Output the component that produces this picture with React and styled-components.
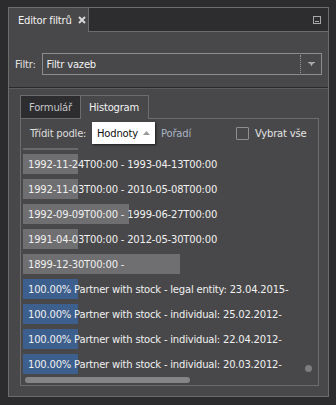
import React from "react";
import styled, { createGlobalStyle } from "styled-components";

const Global = createGlobalStyle`
  html, body { margin: 0; padding: 0; background: #2c2c2e; }
  body { font-family: "DejaVu Sans", Tahoma, sans-serif; font-size: 10px; color: #e6e6e6; }
`;

const Page = styled.div`
  width: 336px;
  height: 405px;
  padding: 7px 8px 0 8px;
  box-sizing: border-box;
  background: #2c2c2e;
`;

const Panel = styled.div`
  width: 321px;
  height: 390px;
  box-sizing: border-box;
  border: 1px solid #6c6c6c;
  background: #48484a;
  display: flex;
  flex-direction: column;
`;

const TabStrip = styled.div`
  display: flex;
  height: 24px;
`;

const DocTab = styled.div`
  width: 80px;
  border-right: 1px solid #6c6c6c;
  background: #48484a;
  display: flex;
  align-items: center;
  padding-left: 9px;
  box-sizing: border-box;
  gap: 6px;
  color: #f2f2f2;
  font-size: 10px;
  letter-spacing: -0.2px;
  white-space: nowrap;
`;

const StripRest = styled.div`
  flex: 1;
  background: #2d2d30;
  border-bottom: 1px solid #6c6c6c;
  display: flex;
  align-items: center;
  justify-content: flex-end;
  padding-right: 7px;
`;

const FilterRow = styled.div`
  display: flex;
  align-items: center;
  padding: 21px 6px 0 6px;
  gap: 6px;
`;

const Label = styled.span`
  color: #e0e0e0;
  font-size: 10px;
  letter-spacing: -0.2px;
`;

const Combo = styled.div`
  flex: 1;
  height: 22px;
  box-sizing: border-box;
  border: 1px solid #8c8c8c;
  display: flex;
  align-items: center;
  padding-left: 4px;
  color: #f0f0f0;
  font-size: 10px;
  letter-spacing: -0.2px;
`;

const ComboText = styled.span`
  flex: 1;
`;

const ComboButton = styled.div`
  width: 20px;
  height: 18px;
  border-left: 1px dotted #9a9a9a;
  display: flex;
  align-items: center;
  justify-content: center;
`;

const Divider = styled.div`
  margin-top: 12px;
  height: 1px;
  background: #2a2a2c;
  border-bottom: 1px solid #5c5c5e;
`;

const TabsArea = styled.div`
  flex: 1;
  display: flex;
  flex-direction: column;
  padding: 6px 9px 10px 11px;
`;

const TabHeaders = styled.div`
  display: flex;
  height: 23px;
`;

const InnerTab = styled.div`
  box-sizing: border-box;
  width: ${p => p.$w}px;
  border: 1px solid #6c6c6c;
  border-bottom: none;
  ${p => (p.$first ? "" : "border-left: none;")}
  background: ${p => (p.$active ? "#48484a" : "#2d2d30")};
  color: ${p => (p.$active ? "#f2f2f2" : "#c4c4c8")};
  display: flex;
  align-items: center;
  padding-left: 8px;
  font-size: 10px;
  letter-spacing: -0.2px;
  margin-bottom: ${p => (p.$active ? "-1px" : "0")};
  position: relative;
  z-index: ${p => (p.$active ? 1 : 0)};
`;

const InnerBox = styled.div`
  flex: 1;
  border: 1px solid #6c6c6c;
  display: flex;
  flex-direction: column;
  position: relative;
`;

const SortRow = styled.div`
  display: flex;
  align-items: center;
  padding: 3px 0 0 9px;
  height: 22px;
`;

const SortLabel = styled.span`
  color: #dedede;
  font-size: 10px;
  letter-spacing: -0.2px;
  width: 62px;
`;

const SortButton = styled.div`
  height: 22px;
  width: 63px;
  box-sizing: border-box;
  background: #ffffff;
  color: #111;
  display: flex;
  align-items: center;
  padding-left: 5px;
  gap: 5px;
  font-size: 10px;
  letter-spacing: -0.2px;
  box-shadow: 1px 1px 2px rgba(0, 0, 0, 0.6);
`;

const SortAlt = styled.span`
  margin-left: 6px;
  color: #a9b3c4;
  font-size: 10px;
  letter-spacing: -0.2px;
`;

const CheckWrap = styled.label`
  margin-left: 45px;
  display: flex;
  align-items: center;
  gap: 6px;
  color: #e4e4e4;
  font-size: 10px;
  letter-spacing: -0.2px;
`;

const CheckBox = styled.span`
  width: 13px;
  height: 13px;
  box-sizing: border-box;
  border: 1px solid #8e8e8e;
  border-radius: 1px;
`;

const HeadLine = styled.div`
  margin: 4px 0 0 2px;
  width: 55px;
  height: 2px;
  background: #6a6a6c;
`;

const List = styled.div`
  display: flex;
  flex-direction: column;
  gap: 5px;
  padding: 4px 0 0 2px;
  flex: 1;
`;

const Row = styled.div`
  position: relative;
  height: 20px;
  display: flex;
  align-items: center;
  white-space: nowrap;
`;

const Bar = styled.div`
  position: absolute;
  left: 0;
  top: 0;
  bottom: 0;
  background: ${p => (p.$blue ? "#3d5f8d" : "#6f6f71")};
`;

const RowText = styled.span`
  position: relative;
  padding-left: 5px;
  color: #f0f0f0;
  font-size: 10px;
  letter-spacing: -0.2px;
`;

const HScroll = styled.div`
  margin: 0 0 2px 4px;
  width: 165px;
  height: 6px;
  border-radius: 3px;
  background: #858587;
`;

const VDot = styled.div`
  position: absolute;
  right: 6px;
  bottom: 13px;
  width: 7px;
  height: 7px;
  border-radius: 50%;
  background: #7d7d7f;
`;

const rows = [
  { w: 55, t: "1992-11-24T00:00 - 1993-04-13T00:00" },
  { w: 55, t: "1992-11-03T00:00 - 2010-05-08T00:00" },
  { w: 106, t: "1992-09-09T00:00 - 1999-06-27T00:00" },
  { w: 55, t: "1991-04-03T00:00 - 2012-05-30T00:00" },
  { w: 157, t: "1899-12-30T00:00 -" },
  { w: 55, blue: true, t: "100.00% Partner with stock - legal entity: 23.04.2015-" },
  { w: 55, blue: true, t: "100.00% Partner with stock - individual: 25.02.2012-" },
  { w: 55, blue: true, t: "100.00% Partner with stock - individual: 22.04.2012-" },
  { w: 55, blue: true, t: "100.00% Partner with stock - individual: 20.03.2012-" },
];

const CloseIcon = () => (
  <svg width="8" height="8" viewBox="0 0 8 8">
    <path d="M1 1 L7 7 M7 1 L1 7" stroke="#d8d8d8" strokeWidth="2" />
  </svg>
);

const MinIcon = () => (
  <svg width="8" height="8" viewBox="0 0 8 8">
    <rect x="0.5" y="0.5" width="7" height="7" fill="none" stroke="#a8a8a8" />
    <rect x="2" y="5" width="4" height="1" fill="#a8a8a8" />
  </svg>
);

const DropArrow = () => (
  <svg width="7" height="4" viewBox="0 0 7 4">
    <path d="M0 0 H7 V1 H6 L4 3 V4 H3 V3 L1 1 H0 Z" fill="#a8a8a8" />
  </svg>
);

const UpArrow = () => (
  <svg width="7" height="4" viewBox="0 0 7 4">
    <path d="M3.5 0 L7 4 H0 Z" fill="#9a9a9a" />
  </svg>
);

export default function App() {
  return (
    <Page>
      <Global />
      <Panel>
        <TabStrip>
          <DocTab>
            Editor filtrů <CloseIcon />
          </DocTab>
          <StripRest>
            <MinIcon />
          </StripRest>
        </TabStrip>
        <FilterRow>
          <Label>Filtr:</Label>
          <Combo>
            <ComboText>Filtr vazeb</ComboText>
            <ComboButton>
              <DropArrow />
            </ComboButton>
          </Combo>
        </FilterRow>
        <Divider />
        <TabsArea>
          <TabHeaders>
            <InnerTab $w={61} $first>Formulář</InnerTab>
            <InnerTab $w={68} $active>Histogram</InnerTab>
          </TabHeaders>
          <InnerBox>
            <SortRow>
              <SortLabel>Třídit podle:</SortLabel>
              <SortButton>
                Hodnoty <UpArrow />
              </SortButton>
              <SortAlt>Pořadí</SortAlt>
              <CheckWrap>
                <CheckBox />
                Vybrat vše
              </CheckWrap>
            </SortRow>
            <HeadLine />
            <List>
              {rows.map((r, i) => (
                <Row key={i}>
                  <Bar $blue={r.blue} style={{ width: r.w }} />
                  <RowText>{r.t}</RowText>
                </Row>
              ))}
            </List>
            <HScroll />
            <VDot />
          </InnerBox>
        </TabsArea>
      </Panel>
    </Page>
  );
}
